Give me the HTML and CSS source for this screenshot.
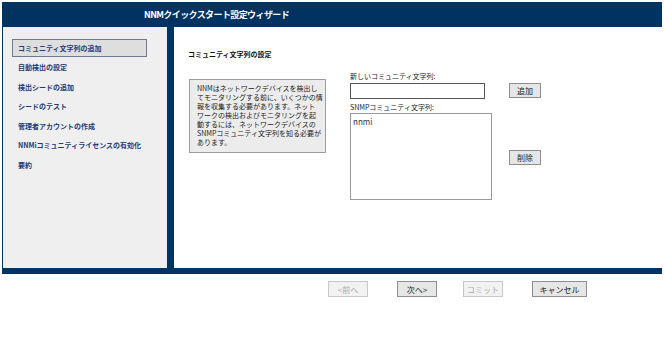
FILE: index.html
```html
<!DOCTYPE html>
<html>
<head>
    <meta charset="UTF-8">
    <title>NNMクイックスタート設定ウィザード</title>
    <link rel="stylesheet" href="styles.css">
</head>
<body>
    <div class="wizard">
        <div class="header">NNMクイックスタート設定ウィザード</div>

        <div class="frame">
            <ul class="steps">
                <li class="current">コミュニティ文字列の追加</li>
                <li>自動検出の設定</li>
                <li>検出シードの追加</li>
                <li>シードのテスト</li>
                <li>管理者アカウントの作成</li>
                <li>NNMiコミュニティライセンスの有効化</li>
                <li>要約</li>
            </ul>

            <div class="content">
                <h2>コミュニティ文字列の設定</h2>
                <div class="panel">
                    <p class="info">NNMはネットワークデバイスを検出し<br>てモニタリングする前に、いくつかの情<br>報を収集する必要があります。ネット<br>ワークの検出およびモニタリングを起<br>動するには、ネットワークデバイスの<br>SNMPコミュニティ文字列を知る必要が<br>あります。</p>

                    <div class="fields">
                        <label for="nueva" class="lbl">新しいコミュニティ文字列:</label>
                        <input type="text" id="nueva" class="text-in">
                        <button type="button" class="btn add">追加</button>

                        <label class="lbl second">SNMPコミュニティ文字列:</label>
                        <div class="list">nnmi</div>
                        <button type="button" class="btn del">削除</button>
                    </div>
                </div>
            </div>
        </div>

        <div class="actions">
            <button type="button" class="btn nav" disabled>&lt;前へ</button>
            <button type="button" class="btn nav">次へ&gt;</button>
            <button type="button" class="btn nav" disabled>コミット</button>
            <button type="button" class="btn nav wide">キャンセル</button>
        </div>
    </div>
</body>
</html>
```

FILE: styles.css
```css
body {
    margin: 0;
    background-color: #fff;
    font-family: "Noto Sans CJK JP", "DejaVu Sans", sans-serif;
}

.wizard {
    padding: 2px 2px 0 2px;
}

.header {
    height: 25px;
    line-height: 25px;
    background-color: #003262; /* azul oscuro */
    color: #fff;
    font-size: 9px;
    font-weight: bold;
    letter-spacing: -0.6px;
    padding-left: 142px;
}

.frame {
    display: flex;
    height: 241px;
    background-color: #003262;
    border-bottom: 6px solid #003262;
}

.steps {
    list-style: none;
    margin: 0 7px 0 1px;
    padding: 12px 0 0 9px;
    width: 155px;
    background-color: #efefef;
}

.steps li {
    width: 130px;
    height: 19.5px;
    line-height: 19.5px;
    padding-left: 6px;
    font-size: 7px;
    font-weight: bold;
    color: #1d3b77;
    white-space: nowrap;
}

.steps li.current {
    height: 16px;
    line-height: 16px;
    width: 128px;
    padding-left: 5px;
    border: 1px solid #6b7a8f;
    background-color: #dedede;
    margin-bottom: 1px;
}

.content {
    flex: 1;
    background-color: #fff;
    padding: 22px 0 0 14px;
}

h2 {
    margin: 0;
    font-size: 7px;
    font-weight: bold;
    color: #111;
    line-height: 10px;
}

.panel {
    display: flex;
    align-items: flex-start;
}

.info {
    width: 126px;
    margin: 20px 0 0 1px;
    padding: 4px 2px 5px 7px;
    background-color: #ececec;
    border: 1px solid #9c9c9c;
    font-size: 7px;
    line-height: 9px;
    color: #222;
    white-space: nowrap;
}

.fields {
    display: grid;
    grid-template-columns: 159px 40px;
    margin: 10px 0 0 24px;
}

.lbl {
    grid-column: 1 / 3;
    font-size: 7px;
    line-height: 8px;
    height: 8px;
    color: #222;
    margin: 3px 0 3px;
}

.lbl.second {
    margin-bottom: 2px;
}

.text-in {
    box-sizing: border-box;
    width: 135px;
    height: 16px;
    margin: 0 0 1px;
    border: 1px solid #555;
    padding: 0 2px;
    font-size: 7px;
}

.list {
    box-sizing: border-box;
    width: 142px;
    height: 87px;
    border: 1px solid #999;
    padding: 3px 2px;
    font-size: 8px;
    line-height: 9px;
    color: #333;
}

.btn {
    box-sizing: border-box;
    height: 16px;
    padding: 0;
    border: 1px solid #8e8e8e;
    background-color: #e6e6e6;
    font-family: "Noto Sans CJK JP", "DejaVu Sans", sans-serif;
    font-size: 8px;
    color: #222;
    cursor: pointer;
}

.add,
.del {
    width: 32px;
    height: 15px;
}

.del {
    align-self: start;
    margin-top: 37px;
}

.actions {
    display: flex;
    padding: 7px 0 0 326px;
}

.nav {
    width: 40px;
    margin-right: 29px;
}

.nav:nth-child(2) {
    margin-right: 26px;
}

.nav.wide {
    width: 55px;
}

.btn:disabled {
    color: #a8a8a8;
    border-color: #c8c8c8;
    background-color: #f2f2f2;
    cursor: default;
}
```
